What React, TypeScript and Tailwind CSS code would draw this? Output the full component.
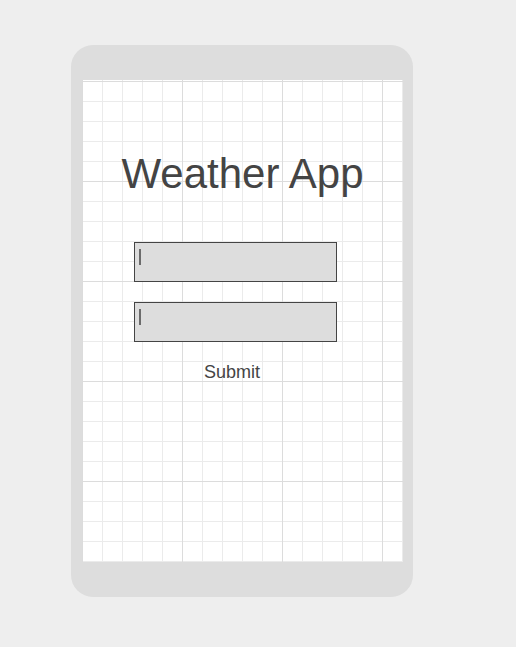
import React from 'react';

function Field() {
  return (
    <div className="w-[203px] h-[40px] bg-[#dddddd] border border-[#444444] pl-[4px] pt-[6px]">
      <div className="w-[2px] h-[16px] bg-[#6b6b6b]" />
    </div>
  );
}

export default function App() {
  return (
    <div className="w-[516px] h-[647px] bg-[#eeeeee] pl-[71px] pt-[45px] font-['Liberation_Sans',Arial,sans-serif]">
      <div className="w-[342px] h-[552px] rounded-[22px] bg-[#dddddd] pt-[35px] px-[11px]">
        {/* screen with grid paper */}
        <div className="w-[321px] h-[482px] bg-white bg-[linear-gradient(to_right,#dcdcdc_1px,transparent_1px),linear-gradient(to_bottom,#dcdcdc_1px,transparent_1px),linear-gradient(to_right,#ebebeb_1px,transparent_1px),linear-gradient(to_bottom,#ebebeb_1px,transparent_1px)] bg-[size:100px_100px,100px_100px,20px_20px,20px_20px] bg-[position:0_1px,0_1px,0_1px,0_1px] flex flex-col">
          <h1 className="mt-[73px] text-center text-[42px] leading-[42px] text-[#444444]">Weather App</h1>
          <div className="mt-[47px] ml-[52px] flex flex-col gap-[20px]">
            <Field />
            <Field />
          </div>
          <button className="mt-[21px] ml-[122px] self-start text-[18px] leading-[18px] text-[#444444]">Submit</button>
        </div>
      </div>
    </div>
  );
}
